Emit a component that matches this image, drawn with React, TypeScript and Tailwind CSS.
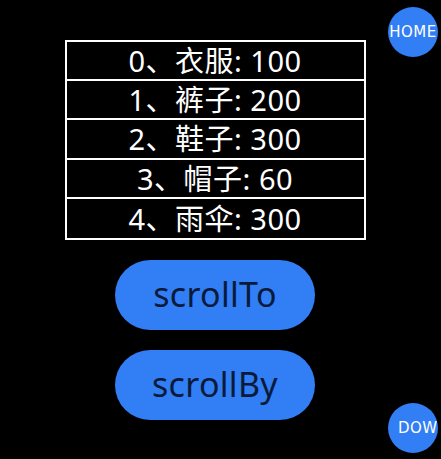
const items = [
  { name: '衣服', price: 100 },
  { name: '裤子', price: 200 },
  { name: '鞋子', price: 300 },
  { name: '帽子', price: 60 },
  { name: '雨伞', price: 300 },
];

export default function App() {
  return (
    <div
      className="relative h-[459px] w-[441px] overflow-hidden bg-black"
      style={{ fontFamily: '"Noto Sans", "Noto Sans CJK SC", sans-serif' }}
    >
      <div className="flex w-[430px] flex-col items-center pt-[40px]">
        <div className="flex w-[301px] flex-col divide-y-2 divide-white border-2 border-white">
          {items.map((item, i) => (
            <div
              key={i}
              className="flex h-[39.2px] items-center justify-center text-[29px] leading-none tracking-[0.5px] text-white"
            >
              {i}、{item.name}: {item.price}
            </div>
          ))}
        </div>

        <button className="mt-[20px] flex h-[70px] w-[200px] items-center justify-center rounded-full bg-[#317ef5] text-[34px] tracking-[0.3px] text-[#0a1a3a]">
          scrollTo
        </button>
        <button className="mt-[20px] flex h-[70px] w-[200px] items-center justify-center rounded-full bg-[#317ef5] text-[34px] tracking-[0.3px] text-[#0a1a3a]">
          scrollBy
        </button>
      </div>

      <div
        className="absolute left-[388px] top-[7px] flex h-[50px] w-[50px] items-center justify-center overflow-hidden whitespace-nowrap rounded-full bg-[#317ef5] text-[15px] tracking-[0.5px] text-white"
        style={{ fontFamily: '"DejaVu Sans", sans-serif' }}
      >
        HOME
      </div>
      <div
        className="absolute left-[388px] top-[403px] flex h-[50px] w-[50px] items-center overflow-hidden whitespace-nowrap rounded-full bg-[#317ef5] pl-[10px] text-[15px] tracking-[0.5px] text-white"
        style={{ fontFamily: '"DejaVu Sans", sans-serif' }}
      >
        DOW
      </div>
    </div>
  );
}
